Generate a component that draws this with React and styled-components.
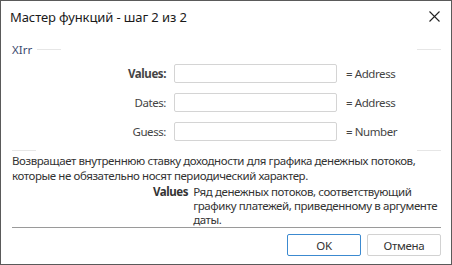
import React from 'react';
import styled, { createGlobalStyle } from 'styled-components';

const GlobalStyle = createGlobalStyle`
  html, body { margin: 0; padding: 0; background: #fff; }
  body { font-family: "Noto Sans", "Open Sans", sans-serif; }
`;

const fields = [
  { name: 'Values', type: 'Address', bold: true },
  { name: 'Dates', type: 'Address' },
  { name: 'Guess', type: 'Number' },
];

const App = () => {
  return (
    <Window>
      <GlobalStyle />
      <TitleBar>
        <Title>Мастер функций - шаг 2 из 2</Title>
        <Close>
          <svg width="11" height="11" viewBox="0 0 11 11">
            <path d="M0.5 0.5 L10.5 10.5 M10.5 0.5 L0.5 10.5" stroke="#222" strokeWidth="1.1" />
          </svg>
        </Close>
      </TitleBar>

      <Group>
        <GroupHead>
          <Legend>XIrr</Legend>
          <Fade />
          <Spacer />
          <Fade />
        </GroupHead>
        <Fields>
          {fields.map(f => (
            <Row key={f.name}>
              <Label bold={f.bold}>{f.name}:</Label>
              <Input />
              <TypeText>= {f.type}</TypeText>
            </Row>
          ))}
        </Fields>
        <GroupFoot>
          <Fade />
          <Spacer />
          <Fade />
        </GroupFoot>
      </Group>

      <Desc>
        Возвращает внутреннюю ставку доходности для графика денежных потоков,
        которые не обязательно носят периодический характер.
      </Desc>
      <ArgInfo>
        <ArgName>Values</ArgName>
        <ArgText>Ряд денежных потоков, соответствующий графику платежей, приведенному в аргументе даты.</ArgText>
      </ArgInfo>

      <Separator />
      <Buttons>
        <Button primary>OK</Button>
        <Button>Отмена</Button>
      </Buttons>
    </Window>
  );
};

const Window = styled.div`
  width: 452px;
  height: 265px;
  box-sizing: border-box;
  border: 1px solid #5a5a5a;
  display: flex;
  flex-direction: column;
  color: #333;
  font-size: 11.5px;
  letter-spacing: -0.42px;
  overflow: hidden;
`;

const TitleBar = styled.div`
  height: 30px;
  display: flex;
  align-items: center;
  justify-content: space-between;
  padding: 0 11px 0 9px;
  flex-shrink: 0;
`;

const Title = styled.span`
  font-size: 13px;
  letter-spacing: -0.1px;
  color: #1a1a1a;
  margin-top: 1px;
`;

const Close = styled.div`
  display: flex;
  margin-top: 1px;
`;

const Group = styled.div`
  padding: 11px 10px 0 11px;
  flex-shrink: 0;
`;

const GroupHead = styled.div`
  display: flex;
  align-items: center;
  height: 14px;
`;

const GroupFoot = styled.div`
  display: flex;
  height: 1px;
  margin-top: 9px;
`;

const Legend = styled.span`
  color: #3c4a6e;
  width: 24px;
  margin-right: 1px;
  letter-spacing: 0;
`;

const Fade = styled.div`
  width: 24px;
  height: 1px;
  background: #e6e6e6;
`;

const Spacer = styled.div`
  flex: 1;
`;

const Fields = styled.div`
  display: flex;
  flex-direction: column;
  gap: 10px;
  margin-top: 8px;
`;

const Row = styled.div`
  display: flex;
  align-items: center;
  height: 19px;
`;

const Label = styled.span`
  width: 162px;
  text-align: right;
  padding-right: 8px;
  box-sizing: border-box;
  font-weight: ${p => (p.bold ? 700 : 400)};
  color: #444;
`;

const Input = styled.div`
  width: 163px;
  height: 19px;
  box-sizing: border-box;
  border: 1px solid #d4d4d4;
  border-radius: 2px;
  background: #fff;
`;

const TypeText = styled.span`
  margin-left: 9px;
  color: #444;
`;

const Desc = styled.div`
  padding: 2px 12px 0 11px;
  line-height: 15px;
  color: #333;
  flex-shrink: 0;
`;

const ArgInfo = styled.div`
  display: flex;
  padding-left: 152px;
  line-height: 14px;
  margin-top: 2px;
  flex-shrink: 0;
`;

const ArgName = styled.span`
  font-weight: 700;
  margin-right: 5px;
  color: #333;
`;

const ArgText = styled.span`
  width: 248px;
  color: #333;
`;

const Separator = styled.div`
  height: 1px;
  background: #9a9a9a;
  margin: 0 10px 0 11px;
  flex-shrink: 0;
`;

const Buttons = styled.div`
  display: flex;
  justify-content: flex-end;
  gap: 6px;
  padding: 6px 10px 0 0;
`;

const Button = styled.button`
  width: 74px;
  height: 22px;
  box-sizing: border-box;
  border: 1px solid ${p => (p.primary ? '#3c8ad0' : '#d2d2d2')};
  border-radius: 2px;
  background: #fff;
  font-family: inherit;
  font-size: 11.5px;
  letter-spacing: -0.3px;
  color: #333;
  padding: 0;
`;

export default App;
